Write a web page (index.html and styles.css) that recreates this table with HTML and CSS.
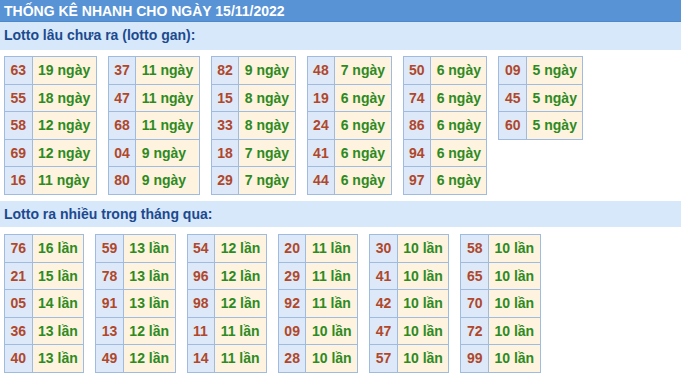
FILE: index.html
```html
<!DOCTYPE html>
<html lang="vi">
<head>
<meta charset="utf-8">
<title>Thống kê nhanh</title>
<link rel="stylesheet" href="styles.css">
</head>
<body>
<div class="title">THỐNG KÊ NHANH CHO NGÀY 15/11/2022</div>
<div class="band band-first">Lotto lâu chưa ra (lotto gan):</div>
<div class="grid grid-first">
  <table class="lt"><tr><td class="n">63</td><td class="v">19 ngày</td></tr><tr><td class="n">55</td><td class="v">18 ngày</td></tr><tr><td class="n">58</td><td class="v">12 ngày</td></tr><tr><td class="n">69</td><td class="v">12 ngày</td></tr><tr><td class="n">16</td><td class="v">11 ngày</td></tr></table>
  <table class="lt"><tr><td class="n">37</td><td class="v">11 ngày</td></tr><tr><td class="n">47</td><td class="v">11 ngày</td></tr><tr><td class="n">68</td><td class="v">11 ngày</td></tr><tr><td class="n">04</td><td class="v">9 ngày</td></tr><tr><td class="n">80</td><td class="v">9 ngày</td></tr></table>
  <table class="lt"><tr><td class="n">82</td><td class="v">9 ngày</td></tr><tr><td class="n">15</td><td class="v">8 ngày</td></tr><tr><td class="n">33</td><td class="v">8 ngày</td></tr><tr><td class="n">18</td><td class="v">7 ngày</td></tr><tr><td class="n">29</td><td class="v">7 ngày</td></tr></table>
  <table class="lt"><tr><td class="n">48</td><td class="v">7 ngày</td></tr><tr><td class="n">19</td><td class="v">6 ngày</td></tr><tr><td class="n">24</td><td class="v">6 ngày</td></tr><tr><td class="n">41</td><td class="v">6 ngày</td></tr><tr><td class="n">44</td><td class="v">6 ngày</td></tr></table>
  <table class="lt"><tr><td class="n">50</td><td class="v">6 ngày</td></tr><tr><td class="n">74</td><td class="v">6 ngày</td></tr><tr><td class="n">86</td><td class="v">6 ngày</td></tr><tr><td class="n">94</td><td class="v">6 ngày</td></tr><tr><td class="n">97</td><td class="v">6 ngày</td></tr></table>
  <table class="lt"><tr><td class="n">09</td><td class="v">5 ngày</td></tr><tr><td class="n">45</td><td class="v">5 ngày</td></tr><tr><td class="n">60</td><td class="v">5 ngày</td></tr></table>
</div>
<div class="band">Lotto ra nhiều trong tháng qua:</div>
<div class="grid">
  <table class="lt"><tr><td class="n">76</td><td class="v">16 lần</td></tr><tr><td class="n">21</td><td class="v">15 lần</td></tr><tr><td class="n">05</td><td class="v">14 lần</td></tr><tr><td class="n">36</td><td class="v">13 lần</td></tr><tr><td class="n">40</td><td class="v">13 lần</td></tr></table>
  <table class="lt"><tr><td class="n">59</td><td class="v">13 lần</td></tr><tr><td class="n">78</td><td class="v">13 lần</td></tr><tr><td class="n">91</td><td class="v">13 lần</td></tr><tr><td class="n">13</td><td class="v">12 lần</td></tr><tr><td class="n">49</td><td class="v">12 lần</td></tr></table>
  <table class="lt"><tr><td class="n">54</td><td class="v">12 lần</td></tr><tr><td class="n">96</td><td class="v">12 lần</td></tr><tr><td class="n">98</td><td class="v">12 lần</td></tr><tr><td class="n">11</td><td class="v">11 lần</td></tr><tr><td class="n">14</td><td class="v">11 lần</td></tr></table>
  <table class="lt"><tr><td class="n">20</td><td class="v">11 lần</td></tr><tr><td class="n">29</td><td class="v">11 lần</td></tr><tr><td class="n">92</td><td class="v">11 lần</td></tr><tr><td class="n">09</td><td class="v">10 lần</td></tr><tr><td class="n">28</td><td class="v">10 lần</td></tr></table>
  <table class="lt"><tr><td class="n">30</td><td class="v">10 lần</td></tr><tr><td class="n">41</td><td class="v">10 lần</td></tr><tr><td class="n">42</td><td class="v">10 lần</td></tr><tr><td class="n">47</td><td class="v">10 lần</td></tr><tr><td class="n">57</td><td class="v">10 lần</td></tr></table>
  <table class="lt"><tr><td class="n">58</td><td class="v">10 lần</td></tr><tr><td class="n">65</td><td class="v">10 lần</td></tr><tr><td class="n">70</td><td class="v">10 lần</td></tr><tr><td class="n">72</td><td class="v">10 lần</td></tr><tr><td class="n">99</td><td class="v">10 lần</td></tr></table>
</div>
</body>
</html>
```
FILE: styles.css
```css
html, body {
  margin: 0;
  padding: 0;
  background: #ffffff;
  font-family: "Liberation Sans", Arial, sans-serif;
  font-weight: bold;
}
.title {
  height: 22px;
  line-height: 22px;
  padding-left: 4px;
  background: #5893d6;
  border-bottom: 1px solid #4f88c8;
  color: #ffffff;
  font-size: 14px;
  box-sizing: border-box;
}
.band {
  height: 26px;
  line-height: 26px;
  padding-left: 4px;
  background: #d6e8fa;
  color: #1d4a8e;
  font-size: 14px;
}
.band-first {
  height: 28px;
  line-height: 27px;
}
.grid {
  display: flex;
  align-items: flex-start;
  gap: 11px;
  padding: 7px 4px 0;
}
.grid-first {
  padding-top: 6px;
  padding-bottom: 6px;
}
.lt {
  border-collapse: collapse;
  font-size: 14px;
}
.lt td {
  border: 1px solid #9fbbe0;
  padding: 5px 5.5px;
  line-height: 16.6px;
  text-align: left;
  white-space: nowrap;
}
.lt .n {
  background: #dde9f8;
  color: #b0472b;
}
.lt .v {
  background: #fdf3de;
  color: #2e8a1e;
}
```
